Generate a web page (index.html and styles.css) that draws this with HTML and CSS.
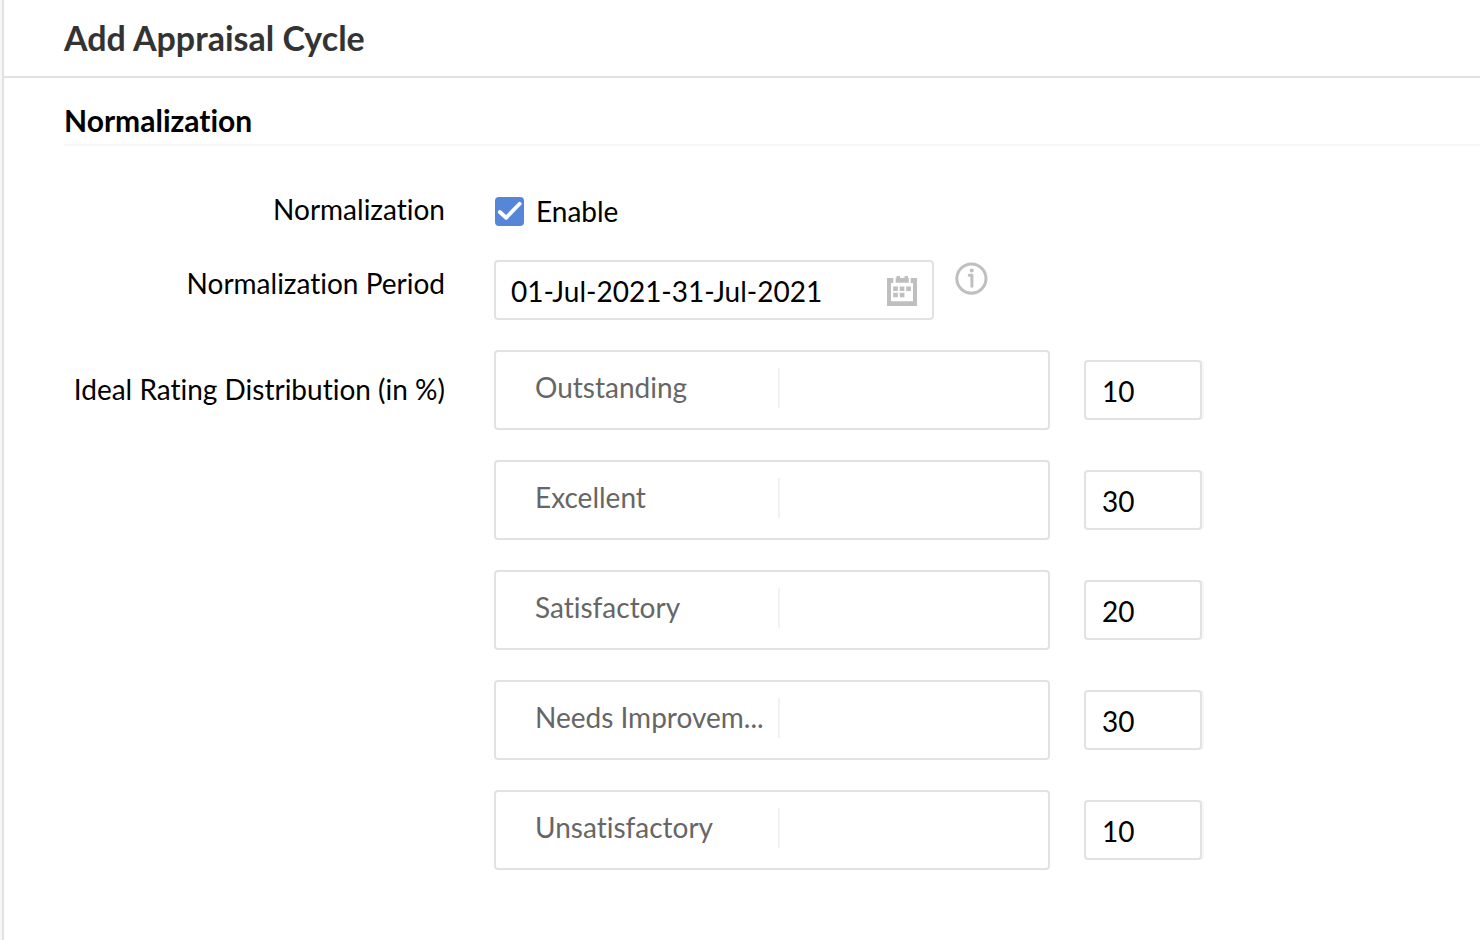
FILE: index.html
```
<!DOCTYPE html>
<html lang="en">

<head>
    <meta charset="UTF-8">
    <meta name="viewport" content="width=device-width, initial-scale=1.0">
    <title>Add Appraisal Cycle</title>
    <link rel="stylesheet" href="styles.css">
</head>

<body>

    <div class="main">
        <header class="header">
            <h1>Add Appraisal Cycle</h1>
        </header>
        <form class="content">
            <h2>Normalization</h2>

            <div class="row enable-row">
                <span class="row-label" id="normalizationLabel">Normalization</span>
                <div class="check" role="group" aria-labelledby="normalizationLabel">
                    <input type="checkbox" id="enable" checked>
                    <label for="enable">Enable</label>
                </div>
            </div>

            <div class="row period-row">
                <label class="row-label" for="period">Normalization Period</label>
                <div class="period">
                    <div class="date-box">
                        <input type="text" id="period" value="01-Jul-2021-31-Jul-2021">
                        <button type="button" class="icon-btn" aria-label="Choose dates">
                            <svg width="30" height="30" viewBox="0 0 30 30" fill="#bfbfbf">
                                <path d="M0 2H6.3V7H4V25.3H26V7H23.7V2H30V30H0Z" />
                                <path d="M8.7 2H9.5V0H13V2H17.5V0H21V2H21.8V6.7H8.7Z" />
                                <path d="M6.2 10.5H10.9V15H6.2ZM12.7 10.5H17.4V15H12.7ZM19.2 10.5H23.9V15H19.2ZM6.2 16.8H10.9V21.3H6.2ZM12.7 16.8H17.4V21.3H12.7Z" />
                            </svg>
                        </button>
                    </div>
                    <button type="button" class="icon-btn" aria-label="Information">
                        <svg width="33" height="33" viewBox="0 0 33 33" fill="none" stroke="#bfbfbf">
                            <circle cx="16.4" cy="16.6" r="14.6" stroke-width="3" />
                            <circle cx="16.7" cy="8.6" r="2" fill="#bfbfbf" stroke="none" />
                            <path d="M14.2 13.2H16.9V24.2" stroke-width="3" stroke-linecap="round" stroke-linejoin="round" />
                        </svg>
                    </button>
                </div>
            </div>

            <div class="row rating-row">
                <span class="row-label" id="ratingLabel">Ideal Rating Distribution (in %)</span>
                <div class="ratings" role="group" aria-labelledby="ratingLabel">
                    <div class="rating">
                        <div class="rating-box"><label for="outstanding">Outstanding</label></div>
                        <input type="text" id="outstanding" value="10">
                    </div>
                    <div class="rating">
                        <div class="rating-box"><label for="excellent">Excellent</label></div>
                        <input type="text" id="excellent" value="30">
                    </div>
                    <div class="rating">
                        <div class="rating-box"><label for="satisfactory">Satisfactory</label></div>
                        <input type="text" id="satisfactory" value="20">
                    </div>
                    <div class="rating">
                        <div class="rating-box"><label for="needsImprovement">Needs Improvem...</label></div>
                        <input type="text" id="needsImprovement" value="30">
                    </div>
                    <div class="rating">
                        <div class="rating-box"><label for="unsatisfactory">Unsatisfactory</label></div>
                        <input type="text" id="unsatisfactory" value="10">
                    </div>
                </div>
            </div>
        </form>
    </div>

</body>

</html>
```
FILE: styles.css
```
* {
    box-sizing: border-box;
}

body {
    margin: 0;
    padding-left: 2px;
    background-color: #f7f7f7;
    font-family: Lato, sans-serif;
    font-size: 28px;
    line-height: 34px;
    font-variant-ligatures: none;
    color: #000;
}

.main {
    min-height: 100vh;
    background-color: #fff;
    border-left: 2px solid #e2e2e2;
}

.header {
    padding: 18px 60px;
    border-bottom: 2px solid #e2e2e2;
}

h1 {
    margin: 0;
    font-size: 34px;
    line-height: 40px;
    color: #333;
}

.content {
    padding: 23px 0 60px 60px;
}

h2 {
    margin: 0 0 46px;
    padding-bottom: 5px;
    border-bottom: 2px solid #f7f7f7;
    font-size: 30px;
    line-height: 38px;
}

.row {
    display: grid;
    grid-template-columns: 381px 1fr;
    column-gap: 49px;
    margin-bottom: 30px;
}

.enable-row {
    margin-bottom: 32px;
}

.row-label {
    text-align: right;
}

.check {
    display: flex;
    align-items: center;
    gap: 12px;
    padding: 2px 0 0 1px;
}

.check input {
    appearance: none;
    width: 29px;
    height: 29px;
    margin: 0;
    border-radius: 4px;
}

.check input:checked {
    background: #5586d8 url("data:image/svg+xml,%3Csvg xmlns='http://www.w3.org/2000/svg' viewBox='0 0 30 30'%3E%3Cpath d='M5 15.5L11.5 21.5L25.5 7' fill='none' stroke='%23fff' stroke-width='4' stroke-linecap='round' stroke-linejoin='round'/%3E%3C/svg%3E") center / 29px;
}

.period-row .row-label {
    padding-top: 6px;
}

.period {
    display: flex;
    align-items: flex-start;
    gap: 21px;
}

.date-box {
    display: flex;
    align-items: center;
    flex: 0 1 440px;
    height: 60px;
    padding: 2px 15px 0;
    border: 2px solid #e2e2e2;
    border-radius: 4px;
}

.date-box input {
    flex: 1;
    min-width: 0;
    padding: 0;
    border: none;
    outline: none;
    font: inherit;
}

.icon-btn {
    display: flex;
    padding: 0;
    border: none;
    background: none;
    cursor: pointer;
}

.period > .icon-btn {
    padding-top: 2px;
}

.rating-row .row-label {
    padding-top: 22px;
}

.ratings {
    display: flex;
    flex-direction: column;
    gap: 30px;
}

.rating {
    display: flex;
    align-items: center;
    gap: 34px;
}

.rating-box {
    flex: 0 1 556px;
    height: 80px;
    padding: 16px 39px;
    border: 2px solid #e2e2e2;
    border-radius: 4px;
}

.rating-box label {
    display: block;
    width: 245px;
    height: 40px;
    border-right: 2px solid #f2f2f2;
    line-height: 38px;
    color: #666;
    white-space: nowrap;
}

.rating input {
    width: 118px;
    height: 60px;
    padding: 2px 16px 0;
    border: 2px solid #e2e2e2;
    border-radius: 4px;
    box-shadow: 2px 0 #f7f7f7;
    font: inherit;
}
```
